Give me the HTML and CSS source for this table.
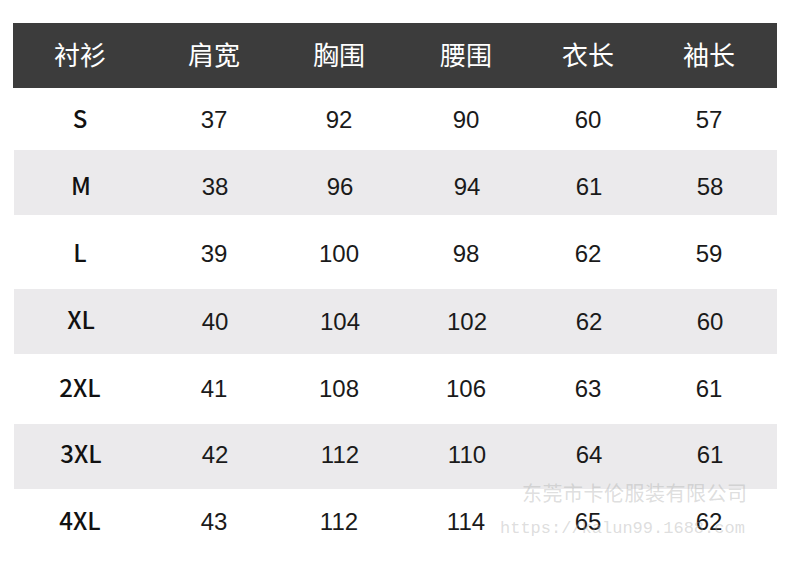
FILE: index.html
```html
<!DOCTYPE html>
<html lang="zh">
<head>
<meta charset="utf-8">
<link rel="stylesheet" href="styles.css">
</head>
<body>
<div class="page">
  <div class="chart">
    <div class="row head">
      <div>衬衫</div><div>肩宽</div><div>胸围</div><div>腰围</div><div>衣长</div><div>袖长</div>
    </div>
    <div class="row r1"><div class="sz">S</div><div>37</div><div>92</div><div>90</div><div>60</div><div>57</div></div>
    <div class="row r2 alt"><div class="sz">M</div><div>38</div><div>96</div><div>94</div><div>61</div><div>58</div></div>
    <div class="row r3"><div class="sz">L</div><div>39</div><div>100</div><div>98</div><div>62</div><div>59</div></div>
    <div class="row r4 alt"><div class="sz">XL</div><div>40</div><div>104</div><div>102</div><div>62</div><div>60</div></div>
    <div class="row r5"><div class="sz">2XL</div><div>41</div><div>108</div><div>106</div><div>63</div><div>61</div></div>
    <div class="row r6 alt"><div class="sz">3XL</div><div>42</div><div>112</div><div>110</div><div>64</div><div>61</div></div>
    <div class="row r7"><div class="sz">4XL</div><div>43</div><div>112</div><div>114</div><div>65</div><div>62</div></div>
  </div>
  <div class="wm wm-name">东莞市卡伦服装有限公司</div>
  <div class="wm wm-url">https://kalun99.1688.com</div>
</div>
</body>
</html>
```

FILE: styles.css
```css
html, body {
  margin: 0;
  padding: 0;
  background: #ffffff;
}
.page {
  position: relative;
  width: 790px;
  height: 582px;
  padding: 23px 13px 0 13px;
  box-sizing: border-box;
}
.chart {
  width: 764px;
  display: flex;
  flex-direction: column;
}
.row {
  display: grid;
  grid-template-columns: 134px 134px 116px 138px 106px 136px;
  align-items: center;
  justify-items: center;
  font-family: "Liberation Sans", "Noto Sans CJK SC", sans-serif;
  font-size: 24px;
  color: #1a1a1a;
}
.head {
  height: 65px;
  background: #3c3c3c;
  color: #ffffff;
  font-family: "Noto Sans CJK SC", sans-serif;
  font-size: 26px;
  font-weight: 400;
  padding-bottom: 4px;
  box-sizing: border-box;
}
.alt {
  background: #ebeaec;
  margin-left: 1px;
}
.r1 { height: 62px; padding-top: 2px; box-sizing: border-box; }
.r2 { height: 65px; padding-top: 9px; box-sizing: border-box; }
.r3 { height: 74px; padding-top: 4px; box-sizing: border-box; }
.r4 { height: 65px; }
.r5 { height: 70px; }
.r6 { height: 65px; padding-bottom: 3px; box-sizing: border-box; }
.r7 { height: 66px; }
.sz {
  font-family: "Noto Sans CJK SC", sans-serif;
  font-weight: 500;
  font-size: 24px;
  line-height: 24px;
  padding-bottom: 5px;
  color: #111111;
}
.wm {
  position: absolute;
  color: rgba(170, 170, 170, 0.4);
  white-space: nowrap;
}
.wm-name {
  left: 522px;
  top: 478px;
  font-family: "Noto Sans CJK SC", sans-serif;
  font-size: 20px;
  letter-spacing: 0.5px;
}
.wm-url {
  left: 500px;
  top: 519px;
  font-family: "Liberation Mono", monospace;
  font-size: 17px;
}
```
